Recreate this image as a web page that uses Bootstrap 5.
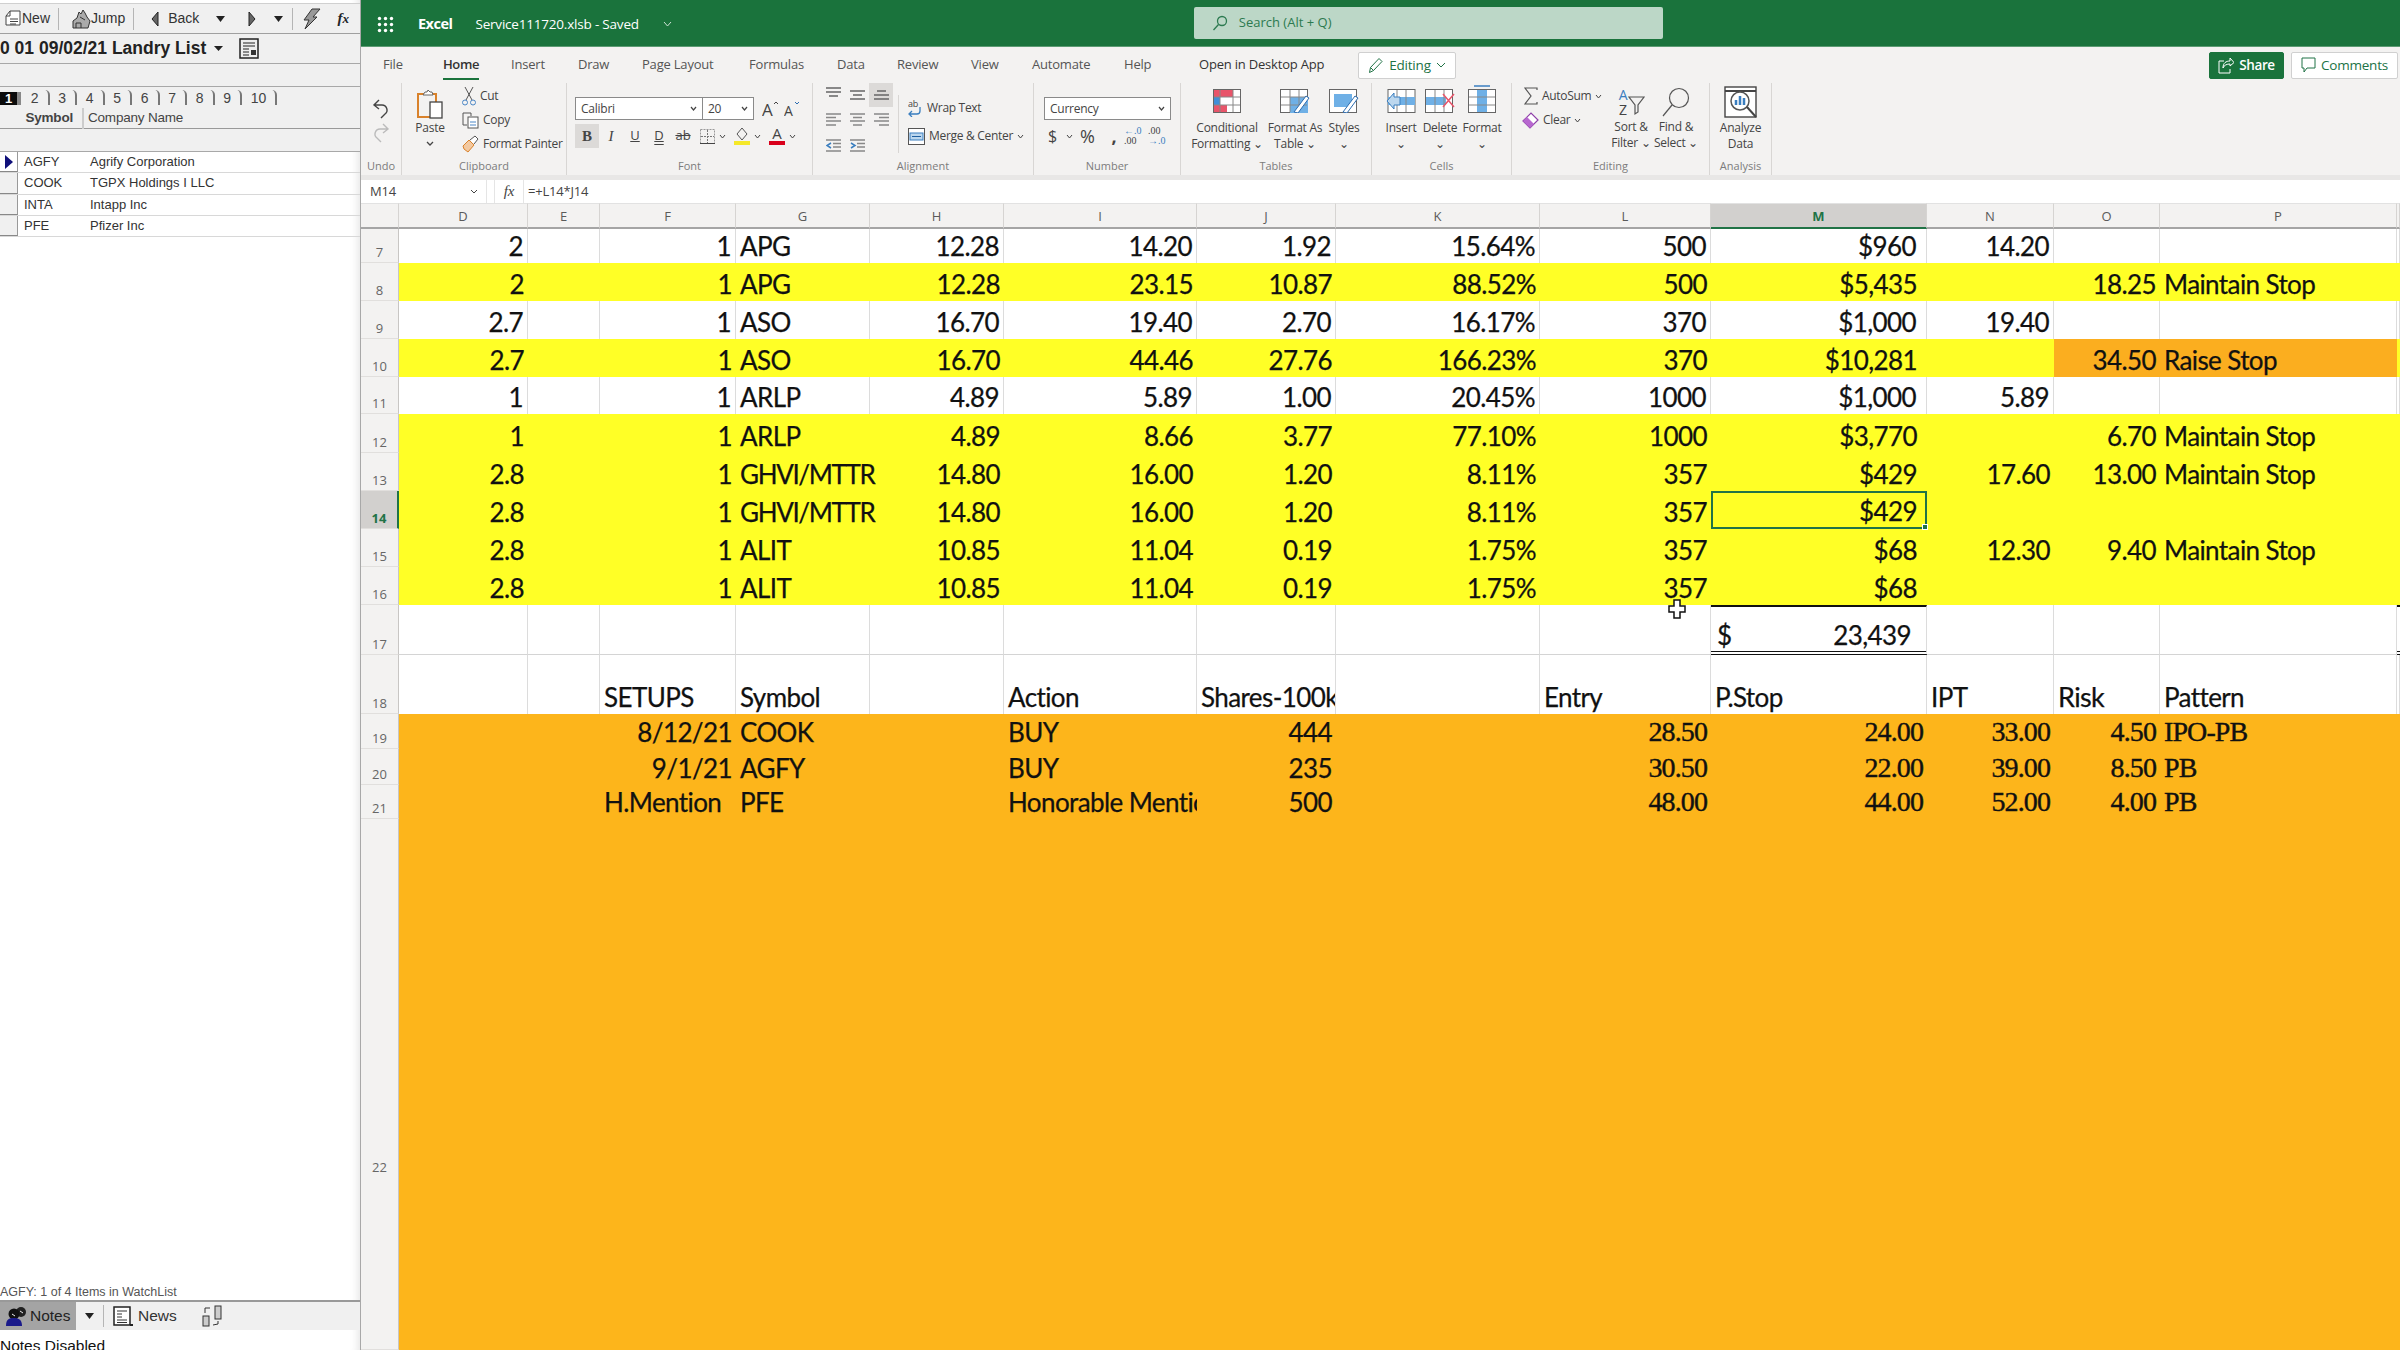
<!DOCTYPE html>
<html lang="en">
<head>
<meta charset="UTF-8">
<title>Service111720.xlsb - Excel</title>
<link href="https://cdn.jsdelivr.net/npm/bootstrap@5.3.0/dist/css/bootstrap.min.css" rel="stylesheet">
<style>
html, body { height: 1350px; overflow: hidden; background: #fff; }
body { font-family: "Open Sans", sans-serif; color: #444; }
svg { display: block; flex: none; }

/* watchlist panel */
.wl-panel { width: 361px; height: 1350px; flex: none; font-family: "Liberation Sans", Arial, sans-serif; border-right: 1px solid #a8a8a8; box-shadow: inset -10px 0 8px -8px #e4e4e4; overflow: hidden; }
.wl-tools { height: 31px; margin-top: 3px; background: #f0f0f0; border-top: 1px solid #d0d0d0; border-bottom: 1px solid #a0a0a0; font-size: 14px; color: #333; white-space: nowrap; }
.wl-sep { width: 1px; height: 22px; background: #b5b5b5; }
.wl-title { height: 30px; background: #f0f0f0; border-bottom: 1px solid #a8a8a8; font-size: 17.5px; font-weight: 700; color: #222; white-space: nowrap; }
.wl-band { height: 23px; background: #f0f0f0; border-bottom: 1px solid #a8a8a8; }
.wl-tabs { height: 22px; background: #f0f0f0; font-size: 14px; color: #444; }
.wl-tab { width: 27.5px; height: 15px; text-align: center; line-height: 16px; border-right: 2px solid #777; border-top-right-radius: 5px; flex: none; }
.wl-tab-wide { width: 35px; }
.wl-tab-on { width: 21px; height: 13px; background: #0c0c0c; color: #fff; font-weight: 700; font-size: 13px; line-height: 13px; text-align: center; border-right: 4px solid #888; flex: none; margin-right: 1px; }
.wl-head { height: 20px; background: #f0f0f0; border-bottom: 1px solid #999; font-size: 13.5px; color: #444; letter-spacing: -.2px; }
.wl-symhead { width: 84px; padding-right: 9px; border-right: 2px solid #ccc; text-align: right; font-weight: 700; }
.wl-row { height: 21.3px; font-size: 13px; color: #333; line-height: 20px; border-bottom: 1px solid #d8d8d8; }
.wl-mark { width: 18px; height: 100%; background: #f0f0f0; border-right: 1px solid #999; border-bottom: 1px solid #888; flex: none; display: flex; align-items: center; justify-content: center; }
.wl-mark-on { background: #fff; }
.wl-sym { width: 72px; padding-left: 6px; flex: none; }
.wl-status { font-size: 12.5px; color: #555; line-height: 16px; padding-top: 1px; white-space: nowrap; }
.wl-foot { height: 30px; background: #f0f0f0; border-top: 2px solid #999; font-size: 15.5px; color: #333; flex: none; }
.wl-notes { height: 100%; width: 76px; background: #a4a4a4; color: #222; }
.wl-msg { height: 20px; font-size: 15.5px; color: #111; line-height: 18px; padding-top: 7px; white-space: nowrap; flex: none; }

/* title bar */
.xl-main { width: 2039px; flex: none; height: 1350px; overflow: hidden; }
.xl-title { height: 47px; background: #1a733c; color: #fff; white-space: nowrap; border-bottom: 1px solid #5c9b73; padding-top: 2px; }
.xl-brand { font-size: 14.5px; font-weight: 700; letter-spacing: -.5px; margin-left: 24px; }
.xl-file { font-size: 13.5px; letter-spacing: -.2px; margin-left: 23px; }
.xl-search { width: 469px; height: 32px; margin-left: 522px; margin-top: -2px; background: #bcd7c7; border-radius: 2px; color: #2c7a50; font-size: 13px; padding-left: 18px; gap: 11px; }

/* ribbon */
.rb-wrap { height: 133px; background: #f3f2f1; border-bottom: 5px solid #e8e7e6; }
.rb-tabs { height: 36px; padding-left: 22px; font-size: 13px; color: #555; white-space: nowrap; letter-spacing: -.2px; }
.rb-tab { flex: none; }
.rb-tab:nth-child(1) { width: 60px; }
.rb-tab:nth-child(2) { width: 68px; }
.rb-tab:nth-child(3) { width: 67px; }
.rb-tab:nth-child(4) { width: 64px; }
.rb-tab:nth-child(5) { width: 107px; }
.rb-tab:nth-child(6) { width: 88px; }
.rb-tab:nth-child(7) { width: 60px; }
.rb-tab:nth-child(8) { width: 74px; }
.rb-tab:nth-child(9) { width: 61px; }
.rb-tab:nth-child(10) { width: 92px; }
.rb-tab:nth-child(11) { width: 75px; }
.rb-tab:nth-child(12) { width: 159px; color: #333; }
.rb-tab-on { display: inline-block; color: #333; font-weight: 600; letter-spacing: -.4px; border-bottom: 2px solid #1a733c; padding-bottom: 3px; margin-top: 5px; }
.rb-btn { height: 27px; background: #fff; border: 1px solid #d0d0d0; border-radius: 2px; font-size: 13.5px; color: #217346; gap: 5px; }
.rb-share { width: 75px; background: #1a733c; border-color: #1a733c; color: #fff; font-weight: 600; letter-spacing: -.4px; }
.rb-comments { width: 107px; margin-left: 7px; margin-right: 2px; letter-spacing: -.2px; }
.rb-groups { height: 92px; }
.rb-group { flex: none; display: flex; flex-direction: column; border-right: 1px solid #d8d6d4; height: 92px; }
.rb-body { flex: 1; display: flex; min-height: 0; }
.rb-label { height: 16px; font-size: 11px; line-height: 14px; text-align: center; color: #7c7c7c; flex: none; }
.rb-tall { display: flex; flex-direction: column; align-items: center; text-align: center; font-size: 12px; line-height: 15.5px; letter-spacing: -.25px; color: #444; flex: none; white-space: nowrap; padding-top: 6px; }
.rb-tall svg.rb-big { margin-bottom: 7px; }
.rb-line { height: 24px; font-size: 12px; letter-spacing: -.3px; gap: 4px; white-space: nowrap; color: #444; }
.rb-line-tall { height: 28px; }
.rb-select { height: 23px; background: #fff; border: 1px solid #8a8a8a; font-size: 12px; letter-spacing: -.25px; padding: 0 5px; }
.rb-ico { width: 24px; height: 24px; display: flex; align-items: center; justify-content: center; flex: none; font-size: 13px; color: #444; }
.rb-ico-on { background: #dcdad8; }
.rb-serif { font-family: "Liberation Serif", serif; font-size: 15px; }
.rb-numline { margin-top: 4px; margin-left: 4px; font-size: 16px; color: #444; }
.rb-dec { font-family: "Liberation Serif", serif; font-size: 10px; line-height: 10px; color: #444; }
.rb-blue { color: #3a7ebf; }

/* formula bar */
.fx-bar { height: 23px; background: #fff; padding-left: 5px; font-size: 13px; letter-spacing: -.2px; color: #444; }
.fx-name { width: 121px; height: 23px; border-right: 1px solid #e5e5e5; padding: 0 4px; }
.fx-fn { width: 30px; height: 23px; margin-left: 7px; margin-right: 4px; border-left: 1px solid #e5e5e5; border-right: 1px solid #e5e5e5; font-family: "Liberation Serif", serif; font-style: italic; font-size: 15px; }

/* sheet */
.xl-sheet { border-collapse: separate; border-spacing: 0; table-layout: fixed; width: 2039px; font-family: Lato, "Liberation Sans", sans-serif; font-size: 26px; color: #111; letter-spacing: -.6px; -webkit-text-stroke: .25px #111; }
.xl-sheet th { height: 26px; background: #f3f2f1; border-top: 1px solid #e2e2e2; border-right: 1px solid #d6d4d2; border-bottom: 2px solid #a5a5a5; font-family: "Open Sans", sans-serif; font-size: 13px; font-weight: 400; color: #5a5a5a; text-align: center; letter-spacing: 0; -webkit-text-stroke: 0; padding: 3px 0 0; }
.xl-sheet th.sel-col { background: #d2d0ce; color: #217346; font-weight: 700; border-bottom-color: #217346; }
.xl-sheet td { padding: 0 4px 1px; vertical-align: bottom; white-space: nowrap; overflow: hidden; line-height: 32px; }
.xl-sheet td.num { text-align: right; }
.xl-sheet td.pad-money { padding-right: 10px; }
.xl-sheet td.tight { letter-spacing: -1.35px; overflow: visible; }
.xl-sheet td.rowno { background: #f3f2f1; border-right: 1px solid #c8c6c4; border-bottom: 1px solid #e1dfdd; font-family: "Open Sans", sans-serif; font-size: 13px; line-height: 18px; color: #666; text-align: center; letter-spacing: 0; -webkit-text-stroke: 0; padding: 0 0 1px; }
.xl-sheet td.rowno-on { background: #d2d0ce; color: #217346; font-weight: 700; border-right: 2px solid #217346; }
.xl-sheet td.rowno-tall { vertical-align: top; padding-top: 339px; }
.row-white td { background: #fff; border-right: 1px solid #dcdcdc; }
.row-grid td { border-bottom: 1px solid #d4d4d4; }
.row-yellow td { background: #ffff26; }
.row-orange td { background: #fdb51b; }
.xl-sheet td.cell-orange { background: #fbae1f; }
.xl-sheet td.cell-sel { border: 2px solid #217346; position: relative; overflow: visible; padding: 0 8px 0 5px; }
.cell-handle { position: absolute; right: -3px; bottom: -3px; width: 6px; height: 6px; background: #217346; border: 1px solid #fff; }
.xl-sheet td.cell-total, .xl-sheet td.cell-tick { border-top: 2px solid #111; border-bottom: 4px double #111; }
.xl-sheet td.cell-total { padding: 0 15px 0 6px; }
.xl-sheet td.cell-tick { padding: 0; border-right: 0; }
.total-wrap { display: flex; justify-content: space-between; }
.xl-sheet td.cell-serif { font-family: "Liberation Serif", serif; font-size: 28px; letter-spacing: -.9px; -webkit-text-stroke: .4px #111; }
.xl-sheet td.cell-big { font-size: 27px; }
.sheet-area { position: relative; }
.xl-cursor { position: absolute; left: 1307px; top: 396px; }
</style>
</head>
<body>
<div class="d-flex">

  <aside class="wl-panel d-flex flex-column">
    <div class="wl-tools d-flex align-items-center">
      <svg width="18" height="20" viewBox="0 0 18 20" class="ms-1"><path d="M6 2h10v14H2V7z" fill="#fff" stroke="#444"/><path d="M6 2v5H2M6 10h8M6 12.500h8M6 15h6" fill="none" stroke="#444"/></svg>
      <span class="me-2">New</span>
      <span class="wl-sep me-2"></span>
      <svg width="20" height="22" viewBox="0 0 20 22" class="ms-1"><path d="M2 20v-7l4-3 2-6 2 2 2-4 2 3 2 4 3 4-2 7z" fill="#aaa" stroke="#333"/><path d="M5 20v-5h5v5M9 9l5 3" fill="none" stroke="#333"/></svg>
      <span class="me-2">Jump</span>
      <span class="wl-sep"></span>
      <svg width="10" height="16" viewBox="0 0 10 16" class="ms-3"><path d="M8 1L2 8l6 7z" fill="#666" stroke="#222"/></svg>
      <span class="ms-2">Back</span>
      <svg width="11" height="6" viewBox="0 0 11 6" class="ms-3"><path d="M1 0h9L5.500 6z" fill="#222"/></svg>
      <svg width="10" height="16" viewBox="0 0 10 16" style="margin-left:21px"><path d="M2 1l6 7-6 7z" fill="#666" stroke="#222"/></svg>
      <svg width="11" height="6" viewBox="0 0 11 6" class="ms-3"><path d="M1 0h9L5.500 6z" fill="#222"/></svg>
      <span class="wl-sep ms-2"></span>
      <svg width="20" height="22" viewBox="0 0 20 22" class="ms-2"><path d="M11 1h8l-7 8h4L4 21l4-9H3z" fill="#999" stroke="#333"/></svg>
      <span class="ms-3 rb-serif fw-bold fst-italic text-dark">f<small>x</small></span>
    </div>
    <div class="wl-title d-flex align-items-center">
      <span>0 01 09/02/21 Landry List</span>
      <svg width="9" height="5" viewBox="0 0 9 5" class="ms-2"><path d="M0 0h9L4.500 5z" fill="#222"/></svg>
      <svg width="20" height="21" viewBox="0 0 20 21" class="ms-3"><rect x="1" y="1" width="18" height="19" fill="#eee" stroke="#222" stroke-width="1.500"/><path d="M4 5h12M4 8h12M4 11h6M4 14h6M4 17h6" stroke="#222"/><rect x="12" y="12" width="5" height="5" fill="#333"/></svg>
    </div>
    <div class="wl-band"></div>
    <div class="wl-tabs d-flex align-items-end pb-1">
      <span class="wl-tab-on">1</span>
      <span class="wl-tab">2</span><span class="wl-tab">3</span><span class="wl-tab">4</span><span class="wl-tab">5</span><span class="wl-tab">6</span><span class="wl-tab">7</span><span class="wl-tab">8</span><span class="wl-tab">9</span><span class="wl-tab wl-tab-wide">10</span>
    </div>
    <div class="wl-head d-flex align-items-center">
      <span class="wl-symhead">Symbol</span>
      <span class="ps-1">Company Name</span>
    </div>
    <div class="wl-band"></div>
    <div class="wl-row d-flex"><span class="wl-mark wl-mark-on"><svg width="8" height="14" viewBox="0 0 8 14"><path d="M0 0l8 7-8 7z" fill="#10107a"/></svg></span><span class="wl-sym">AGFY</span><span>Agrify Corporation</span></div>
    <div class="wl-row d-flex"><span class="wl-mark"></span><span class="wl-sym">COOK</span><span>TGPX Holdings I LLC</span></div>
    <div class="wl-row d-flex"><span class="wl-mark"></span><span class="wl-sym">INTA</span><span>Intapp Inc</span></div>
    <div class="wl-row d-flex"><span class="wl-mark"></span><span class="wl-sym">PFE</span><span>Pfizer Inc</span></div>
    <div class="flex-grow-1"></div>
    <div class="wl-status">AGFY: 1 of 4 Items in WatchList</div>
    <div class="wl-foot d-flex align-items-center">
      <span class="wl-notes d-flex align-items-center">
        <svg width="26" height="22" viewBox="0 0 26 22" class="ms-1"><circle cx="17" cy="7" r="5" fill="#222"/><circle cx="10" cy="9" r="5.500" fill="#111"/><path d="M2 21c0-7 3-8 8-8s8 2 8 8z" fill="#1a1a8a"/><path d="M8 9l3 2M16 6l3 2" stroke="#eee"/></svg>
        <span>Notes</span>
      </span>
      <svg width="11" height="6" viewBox="0 0 11 6" class="ms-2"><path d="M1 0h9L5.500 6z" fill="#222"/></svg>
      <span class="wl-sep ms-2"></span>
      <svg width="22" height="21" viewBox="0 0 22 21" class="ms-2"><rect x="2" y="1" width="16" height="18" fill="#fff" stroke="#222" stroke-width="1.500"/><path d="M5 5h10M5 8h5M5 11h5M5 14h10M5 16.500h10" stroke="#333"/><path d="M18 19h3" stroke="#222" stroke-width="2"/></svg>
      <span class="ms-1">News</span>
      <svg width="22" height="22" viewBox="0 0 22 22" class="ms-4"><rect x="14" y="1" width="6" height="13" fill="#ccc" stroke="#333"/><rect x="2" y="11" width="6" height="10" fill="#ccc" stroke="#333"/><path d="M4 8V3h5M12 20l5-1v-3" fill="none" stroke="#333"/></svg>
    </div>
    <div class="wl-msg">Notes Disabled</div>
  </aside>

  <main class="xl-main">
    <header class="xl-title d-flex align-items-center">
      <svg width="17" height="17" viewBox="0 0 17 17" class="ms-3" fill="#fff"><circle cx="2.500" cy="2.500" r="1.700"/><circle cx="8.500" cy="2.500" r="1.700"/><circle cx="14.500" cy="2.500" r="1.700"/><circle cx="2.500" cy="8.500" r="1.700"/><circle cx="8.500" cy="8.500" r="1.700"/><circle cx="14.500" cy="8.500" r="1.700"/><circle cx="2.500" cy="14.500" r="1.700"/><circle cx="8.500" cy="14.500" r="1.700"/><circle cx="14.500" cy="14.500" r="1.700"/></svg>
      <span class="xl-brand">Excel</span>
      <span class="xl-file">Service111720.xlsb - Saved</span>
      <svg width="9" height="6" viewBox="0 0 9 6" class="ms-4"><path d="M1 1l3.500 4L8 1" fill="none" stroke="#cfe3d6"/></svg>
      <div class="xl-search d-flex align-items-center">
        <svg width="16" height="16" viewBox="0 0 16 16"><circle cx="10" cy="6" r="4.500" fill="none" stroke="#2c7a50" stroke-width="1.300"/><path d="M6.500 9.500L1.500 15" stroke="#2c7a50" stroke-width="1.300"/></svg>
        <span>Search (Alt + Q)</span>
      </div>
    </header>

    <section class="rb-wrap">
      <div class="rb-tabs d-flex align-items-center">
        <span class="rb-tab">File</span>
        <span class="rb-tab"><span class="rb-tab-on">Home</span></span>
        <span class="rb-tab">Insert</span>
        <span class="rb-tab">Draw</span>
        <span class="rb-tab">Page Layout</span>
        <span class="rb-tab">Formulas</span>
        <span class="rb-tab">Data</span>
        <span class="rb-tab">Review</span>
        <span class="rb-tab">View</span>
        <span class="rb-tab">Automate</span>
        <span class="rb-tab">Help</span>
        <span class="rb-tab">Open in Desktop App</span>
        <span class="rb-btn d-flex align-items-center justify-content-center" style="width:98px">
          <svg width="16" height="18" viewBox="0 0 16 18"><path d="M1.500 16.500l1-5L11 2.500l3 3-8.500 9zM2.500 11.500l3 3" fill="none" stroke="#217346"/></svg>Editing
          <svg width="10" height="6" viewBox="0 0 10 6"><path d="M1 1l4 4 4-4" fill="none" stroke="#217346"/></svg>
        </span>
        <span class="rb-btn rb-share d-flex align-items-center justify-content-center ms-auto">
          <svg width="16" height="18" viewBox="0 0 16 18"><path d="M6 5H1v12h11v-4M5 12c0-5 3-7 7-7V2l4 4.500L12 10V8c-3 0-6 1-7 4z" fill="none" stroke="#fff"/></svg>Share
        </span>
        <span class="rb-btn rb-comments d-flex align-items-center justify-content-center">
          <svg width="15" height="16" viewBox="0 0 15 16"><path d="M1 1h13v10H6l-3 4v-4H1z" fill="none" stroke="#217346"/></svg>Comments
        </span>
      </div>

      <div class="rb-groups d-flex">
        <!-- undo -->
        <div class="rb-group" style="width:41px">
          <div class="rb-body flex-column align-items-center pt-3">
            <svg width="18" height="20" viewBox="0 0 18 20"><path d="M7 1L2 6l5 4M2 6h8a5 5 0 0 1 3 9l-4 4" fill="none" stroke="#444" stroke-width="1.400"/></svg>
            <svg width="18" height="20" viewBox="0 0 18 20" class="mt-1"><path d="M11 1l5 5-5 4M16 6H8a5 5 0 0 0-3 9l4 4" fill="none" stroke="#bbb" stroke-width="1.400"/></svg>
          </div>
          <div class="rb-label">Undo</div>
        </div>
        <!-- clipboard -->
        <div class="rb-group" style="width:165px">
          <div class="rb-body">
            <div class="rb-tall" style="width:36px;margin-left:10px">
              <svg class="rb-big" width="28" height="30" viewBox="0 0 28 30" style="margin-bottom:1px"><path d="M8 5H2v23h12" fill="none" stroke="#d9822b" stroke-width="2"/><path d="M14 5h6v8" fill="none" stroke="#d9822b" stroke-width="2"/><path d="M7 6l2-3h2l1-2 2 2h2l1 3z" fill="#fff" stroke="#666"/><rect x="14" y="13" width="12" height="16" fill="#fff" stroke="#444" stroke-width="1.300"/></svg>
              <span>Paste</span>
              <svg width="8" height="5" viewBox="0 0 8 5" style="margin-top:5px"><path d="M1 1l3 3 3-3" fill="none" stroke="#444" stroke-width="1.300"/></svg>
            </div>
            <div style="margin-left:14px;padding-top:1px">
              <div class="rb-line d-flex align-items-center"><svg width="14" height="20" viewBox="0 0 14 20"><path d="M3 1l7 13M11 1L4 14" fill="none" stroke="#555"/><circle cx="3" cy="16.500" r="2.500" fill="none" stroke="#4a86c5"/><circle cx="11" cy="16.500" r="2.500" fill="none" stroke="#4a86c5"/></svg><span>Cut</span></div>
              <div class="rb-line d-flex align-items-center"><svg width="17" height="17" viewBox="0 0 17 17"><path d="M1 1h8v3M1 1v12h4" fill="none" stroke="#555"/><rect x="6" y="5" width="10" height="11" fill="#fff" stroke="#555"/><path d="M8 10h6M8 13h6" stroke="#4a86c5"/></svg><span>Copy</span></div>
              <div class="rb-line d-flex align-items-center"><svg width="17" height="18" viewBox="0 0 17 18"><path d="M1 11l6-6 5 5-6 7-4-3z" fill="#f3c9a0" stroke="#d9822b"/><path d="M8 5l5-4 3 3-4 5" fill="#fff" stroke="#555"/></svg><span>Format Painter</span></div>
            </div>
          </div>
          <div class="rb-label">Clipboard</div>
        </div>
        <!-- font -->
        <div class="rb-group" style="width:246px">
          <div class="rb-body flex-column" style="padding:14px 0 0 8px">
            <div class="d-flex align-items-center">
              <span class="rb-select d-flex align-items-center justify-content-between" style="width:128px">Calibri<svg width="7" height="5" viewBox="0 0 7 5"><path d="M1 1l2.500 3L6 1" fill="none" stroke="#444" stroke-width="1.200"/></svg></span>
              <span class="rb-select d-flex align-items-center justify-content-between" style="width:52px;margin-left:-1px">20<svg width="7" height="5" viewBox="0 0 7 5"><path d="M1 1l2.500 3L6 1" fill="none" stroke="#444" stroke-width="1.200"/></svg></span>
              <svg width="18" height="20" viewBox="0 0 18 20" class="ms-2"><text x="0" y="17" font-family="Open Sans" font-size="17" fill="#444">A</text><path d="M12 5l2-2 2 2" fill="none" stroke="#444"/></svg>
              <svg width="18" height="20" viewBox="0 0 18 20" class="ms-1"><text x="0" y="17" font-family="Open Sans" font-size="14" fill="#444">A</text><path d="M11 3l2 2 2-2" fill="none" stroke="#2b6cb0"/></svg>
            </div>
            <div class="d-flex align-items-center" style="margin-top:4px">
              <span class="rb-ico rb-ico-on fw-bold rb-serif">B</span>
              <span class="rb-ico rb-serif fst-italic">I</span>
              <span class="rb-ico text-decoration-underline">U</span>
              <span class="rb-ico" style="text-decoration:underline double">D</span>
              <span class="rb-ico text-decoration-line-through">ab</span>
              <span class="rb-ico"><svg width="15" height="15" viewBox="0 0 15 15"><rect x=".5" y=".5" width="14" height="14" fill="none" stroke="#999" stroke-dasharray="2 1"/><path d="M7.500 1v13M1 7.500h13" stroke="#777" stroke-dasharray="2 1"/><path d="M0 14.500h15" stroke="#444"/></svg></span>
              <svg width="7" height="5" viewBox="0 0 7 5"><path d="M1 1l2.500 3L6 1" fill="none" stroke="#444"/></svg>
              <span class="rb-ico ms-1"><svg width="16" height="19" viewBox="0 0 16 19"><path d="M8 1l5 6-5 6-5-6z" fill="none" stroke="#555"/><rect x="0" y="14" width="16" height="4" fill="#f5e829"/></svg></span>
              <svg width="7" height="5" viewBox="0 0 7 5"><path d="M1 1l2.500 3L6 1" fill="none" stroke="#444"/></svg>
              <span class="rb-ico ms-1"><svg width="16" height="19" viewBox="0 0 16 19"><text x="8" y="12" text-anchor="middle" font-family="Open Sans" font-size="15" fill="#444">A</text><rect x="0" y="14" width="16" height="4" fill="#d9001b"/></svg></span>
              <svg width="7" height="5" viewBox="0 0 7 5"><path d="M1 1l2.500 3L6 1" fill="none" stroke="#444"/></svg>
            </div>
          </div>
          <div class="rb-label">Font</div>
        </div>
        <!-- alignment -->
        <div class="rb-group" style="width:221px">
          <div class="rb-body">
            <div class="d-flex flex-column" style="margin-left:8px;width:72px">
              <div class="d-flex">
                <span class="rb-ico align-items-start pt-1"><svg width="15" height="11" viewBox="0 0 15 11" stroke="#666" stroke-width="1.500"><path d="M0 1h15M0 5h15M3 9h9"/></svg></span>
                <span class="rb-ico"><svg width="15" height="11" viewBox="0 0 15 11" stroke="#666" stroke-width="1.500"><path d="M0 1h15M3 5h9M0 9h15"/></svg></span>
                <span class="rb-ico rb-ico-on"><svg width="15" height="11" viewBox="0 0 15 11" stroke="#666" stroke-width="1.500"><path d="M3 1h9M0 5h15M0 9h15"/></svg></span>
              </div>
              <div class="d-flex">
                <span class="rb-ico"><svg width="15" height="13" viewBox="0 0 15 13" stroke="#888" stroke-width="1.500"><path d="M0 1h15M0 4.500h10M0 8h15M0 12h10"/></svg></span>
                <span class="rb-ico"><svg width="15" height="13" viewBox="0 0 15 13" stroke="#888" stroke-width="1.500"><path d="M0 1h15M3 4.500h9M0 8h15M3 12h9"/></svg></span>
                <span class="rb-ico"><svg width="15" height="13" viewBox="0 0 15 13" stroke="#888" stroke-width="1.500"><path d="M0 1h15M5 4.500h10M0 8h15M5 12h10"/></svg></span>
              </div>
              <div class="d-flex" style="margin-top:2px">
                <span class="rb-ico"><svg width="15" height="13" viewBox="0 0 15 13" stroke="#888" stroke-width="1.500"><path d="M0 1h15M0 12h15M7 4.500h8M7 8h8"/><path d="M5 4L1 6.500 5 9" fill="none" stroke="#3a7ebf"/></svg></span>
                <span class="rb-ico"><svg width="15" height="13" viewBox="0 0 15 13" stroke="#888" stroke-width="1.500"><path d="M0 1h15M0 12h15M7 4.500h8M7 8h8"/><path d="M1 4l4 2.500L1 9" fill="none" stroke="#3a7ebf"/></svg></span>
              </div>
            </div>
            <div style="margin:12px 0 6px 5px;width:1px;background:#d8d6d4"></div>
            <div style="margin-left:9px;padding-top:11px">
              <div class="rb-line rb-line-tall d-flex align-items-center"><svg width="15" height="18" viewBox="0 0 15 18"><text x="0" y="8" font-family="Open Sans" font-size="9" fill="#444">ab</text><path d="M12 8v4a3 3 0 0 1-3 3H2M4 12l-3 3 3 3" fill="none" stroke="#3a7ebf" stroke-width="1.300"/></svg><span>Wrap Text</span></div>
              <div class="rb-line rb-line-tall d-flex align-items-center"><svg width="17" height="17" viewBox="0 0 17 17"><rect x=".5" y=".5" width="16" height="16" fill="#fff" stroke="#555"/><rect x="2" y="5" width="13" height="7" fill="#bcd7ee" stroke="#3a7ebf"/><path d="M4 8.500h9" stroke="#1f5f9f"/></svg><span>Merge &amp; Center</span><svg width="7" height="5" viewBox="0 0 7 5"><path d="M1 1l2.500 3L6 1" fill="none" stroke="#444"/></svg></div>
            </div>
          </div>
          <div class="rb-label">Alignment</div>
        </div>
        <!-- number -->
        <div class="rb-group" style="width:147px">
          <div class="rb-body flex-column" style="padding:14px 0 0 10px">
            <span class="rb-select d-flex align-items-center justify-content-between" style="width:127px">Currency<svg width="7" height="5" viewBox="0 0 7 5"><path d="M1 1l2.500 3L6 1" fill="none" stroke="#444" stroke-width="1.200"/></svg></span>
            <div class="rb-numline d-flex align-items-center">
              <span style="width:18px">$</span>
              <svg width="7" height="5" viewBox="0 0 7 5"><path d="M1 1l2.500 3L6 1" fill="none" stroke="#444"/></svg>
              <span style="margin-left:7px;width:24px;font-size:18px;line-height:20px">%</span>
              <span class="fw-bold" style="width:20px;text-align:center;font-size:18px;line-height:20px">,</span>
              <span class="rb-dec" style="width:24px"><span class="rb-blue">&larr;.0</span><br>.00</span>
              <span class="rb-dec" style="width:20px">.00<br><span class="rb-blue">&rarr;.0</span></span>
            </div>
          </div>
          <div class="rb-label">Number</div>
        </div>
        <!-- tables -->
        <div class="rb-group" style="width:191px">
          <div class="rb-body" style="padding-left:4px">
            <div class="rb-tall" style="width:84px">
              <svg class="rb-big" width="28" height="24" viewBox="0 0 28 24"><rect x=".5" y=".5" width="27" height="23" fill="#fff" stroke="#666"/><rect x="1" y="1" width="13" height="7" fill="#e8556a"/><rect x="1" y="8" width="6" height="8" fill="#3f8fd8"/><rect x="1" y="16" width="13" height="7" fill="#e8556a"/><rect x="14" y="1" width="6" height="7" fill="#e8556a"/><path d="M20 1v22M7 1v22M1 8h26M1 16h26" stroke="#888"/></svg>
              <span>Conditional</span><span>Formatting &#8964;</span>
            </div>
            <div class="rb-tall" style="width:52px">
              <svg class="rb-big" width="30" height="24" viewBox="0 0 30 24"><rect x=".5" y=".5" width="27" height="23" fill="#fff" stroke="#666"/><rect x="10" y="8" width="18" height="16" fill="#6fb0e6"/><path d="M10 1v22M19 1v22M1 8h26M1 16h26" stroke="#888"/><path d="M14 23l12-16 3 2-11 15z" fill="#fff" stroke="#2b6cb0"/></svg>
              <span>Format As</span><span>Table &#8964;</span>
            </div>
            <div class="rb-tall" style="width:46px">
              <svg class="rb-big" width="30" height="24" viewBox="0 0 30 24"><rect x=".5" y=".5" width="27" height="23" fill="#fff" stroke="#666"/><rect x="5" y="5" width="18" height="13" fill="#6fb0e6"/><path d="M14 23l12-16 3 2-11 15z" fill="#fff" stroke="#2b6cb0"/></svg>
              <span>Styles</span><span>&#8964;</span>
            </div>
          </div>
          <div class="rb-label">Tables</div>
        </div>
        <!-- cells -->
        <div class="rb-group" style="width:140px">
          <div class="rb-body" style="padding-left:10px">
            <div class="rb-tall" style="width:38px">
              <svg class="rb-big" width="31" height="24" viewBox="0 0 31 24"><rect x="2" y=".5" width="27" height="23" fill="#fff" stroke="#666"/><rect x="2" y="8" width="27" height="8" fill="#6fb0e6"/><path d="M11 1v22M20 1v22" stroke="#888"/><path d="M8 4L1 12l7 8v-4h6V8H8z" fill="#bcd7ee" stroke="#3a7ebf"/></svg>
              <span>Insert</span><span>&#8964;</span>
            </div>
            <div class="rb-tall" style="width:40px">
              <svg class="rb-big" width="30" height="24" viewBox="0 0 30 24"><rect x=".5" y=".5" width="27" height="23" fill="#fff" stroke="#666"/><rect x="1" y="8" width="20" height="8" fill="#6fb0e6"/><path d="M10 1v22M19 1v22" stroke="#888"/><path d="M18 5l11 13M29 5L18 18" stroke="#e8556a" stroke-width="1.500"/></svg>
              <span>Delete</span><span>&#8964;</span>
            </div>
            <div class="rb-tall" style="width:44px;padding-top:2px">
              <svg class="rb-big" width="28" height="28" viewBox="0 0 28 28"><path d="M6 1h16" stroke="#3a7ebf" stroke-width="1.500"/><rect x=".5" y="4.500" width="27" height="23" fill="#fff" stroke="#666"/><rect x="9" y="5" width="10" height="22" fill="#6fb0e6"/><path d="M1 12h26M1 20h26" stroke="#888"/></svg>
              <span>Format</span><span>&#8964;</span>
            </div>
          </div>
          <div class="rb-label">Cells</div>
        </div>
        <!-- editing -->
        <div class="rb-group" style="width:198px">
          <div class="rb-body" style="padding-left:12px">
            <div style="width:84px;padding-top:1px">
              <div class="rb-line d-flex align-items-center"><svg width="14" height="18" viewBox="0 0 14 18"><path d="M13 3V1H1l6 8-6 8h12v-2" fill="none" stroke="#555" stroke-width="1.200"/></svg><span>AutoSum</span><svg width="7" height="5" viewBox="0 0 7 5"><path d="M1 1l2.500 3L6 1" fill="none" stroke="#444"/></svg></div>
              <div class="rb-line d-flex align-items-center"><svg width="17" height="17" viewBox="0 0 17 17" style="margin-left:-2px"><path d="M1 9l8-8 7 7-8 8z" fill="#fff" stroke="#8e3fa8" stroke-width="1.200"/><path d="M1 9l4-4 7 7-4 4z" fill="#b768cf"/></svg><span>Clear</span><svg width="7" height="5" viewBox="0 0 7 5"><path d="M1 1l2.500 3L6 1" fill="none" stroke="#444"/></svg></div>
            </div>
            <div class="rb-tall" style="width:46px;padding-top:4px">
              <svg class="rb-big" width="28" height="30" viewBox="0 0 28 30" style="margin-bottom:2px"><text x="6" y="13" text-anchor="middle" font-family="Open Sans" font-size="14" fill="#3a7ebf">A</text><text x="6" y="28" text-anchor="middle" font-family="Open Sans" font-size="14" fill="#444">Z</text><path d="M12 10h15l-6 8v7l-3 2v-9z" fill="none" stroke="#555" stroke-width="1.200"/></svg>
              <span>Sort &amp;</span><span>Filter &#8964;</span>
            </div>
            <div class="rb-tall" style="width:44px;padding-top:4px">
              <svg class="rb-big" width="30" height="30" viewBox="0 0 30 30" style="margin-bottom:2px"><circle cx="18" cy="11" r="9.500" fill="none" stroke="#555" stroke-width="1.200"/><path d="M11 18L2 29" stroke="#555" stroke-width="1.200"/></svg>
              <span>Find &amp;</span><span>Select &#8964;</span>
            </div>
          </div>
          <div class="rb-label">Editing</div>
        </div>
        <!-- analysis -->
        <div class="rb-group" style="width:62px">
          <div class="rb-body justify-content-center">
            <div class="rb-tall" style="padding-top:3px">
              <svg class="rb-big" width="34" height="32" viewBox="0 0 34 32" style="margin-bottom:2px"><rect x="1" y="1" width="31" height="30" fill="#fff" stroke="#444" stroke-width="1.400"/><path d="M1 5h31" stroke="#444" stroke-width="2"/><circle cx="16" cy="15" r="9" fill="#fff" stroke="#555" stroke-width="1.500"/><path d="M12 19v-5M16 19v-9M20 19v-7" stroke="#3a7ebf" stroke-width="2.500"/><path d="M23 21l9 10" stroke="#444" stroke-width="2"/></svg>
              <span>Analyze</span><span>Data</span>
            </div>
          </div>
          <div class="rb-label">Analysis</div>
        </div>
      </div>
    </section>

    <div class="fx-bar d-flex align-items-center">
      <div class="fx-name d-flex align-items-center justify-content-between">M14<svg width="8" height="5" viewBox="0 0 8 5" class="me-1"><path d="M1 1l3 3 3-3" fill="none" stroke="#444"/></svg></div>
      <div class="fx-fn d-flex align-items-center justify-content-center">fx</div>
      <div>=+L14*J14</div>
    </div>

    <div class="sheet-area">
      <table class="xl-sheet">
        <colgroup id="sheetCols"></colgroup>
        <thead><tr id="sheetHead"></tr></thead>
        <tbody id="sheetBody"></tbody>
      </table>
      <svg class="xl-cursor" width="18" height="20" viewBox="0 0 18 20"><path d="M6 1h6v6h5v6h-5v6H6v-6H1V7h5z" fill="#fff" stroke="#111" stroke-width="1.500"/></svg>
    </div>
  </main>
</div>

<script src="https://cdn.jsdelivr.net/npm/bootstrap@5.3.0/dist/js/bootstrap.bundle.min.js"></script>
<script>
  const widths = [38, 129, 72, 136, 134, 134, 193, 139, 204, 171, 216, 127, 106, 237, 3];
  const letters = ['', 'D', 'E', 'F', 'G', 'H', 'I', 'J', 'K', 'L', 'M', 'N', 'O', 'P', ''];

  document.getElementById('sheetCols').innerHTML = widths.map(w => `<col width="${w}">`).join('');
  document.getElementById('sheetHead').innerHTML = letters.map(l =>
    `<th class="${l === 'M' ? 'sel-col' : ''}">${l}</th>`).join('');

  // D E F G H I J K L M N O P
  const rows = [
    [7, 34, 'white', ['2', '', '1', 'APG', '12.28', '14.20', '1.92', '15.64%', '500', '$960', '14.20', '', '']],
    [8, 38, 'yellow', ['2', '', '1', 'APG', '12.28', '23.15', '10.87', '88.52%', '500', '$5,435', '', '18.25', 'Maintain Stop']],
    [9, 38, 'white', ['2.7', '', '1', 'ASO', '16.70', '19.40', '2.70', '16.17%', '370', '$1,000', '19.40', '', '']],
    [10, 38, 'yellow', ['2.7', '', '1', 'ASO', '16.70', '44.46', '27.76', '166.23%', '370', '$10,281', '', '34.50', 'Raise Stop']],
    [11, 37, 'white', ['1', '', '1', 'ARLP', '4.89', '5.89', '1.00', '20.45%', '1000', '$1,000', '5.89', '', '']],
    [12, 39, 'yellow', ['1', '', '1', 'ARLP', '4.89', '8.66', '3.77', '77.10%', '1000', '$3,770', '', '6.70', 'Maintain Stop']],
    [13, 38, 'yellow', ['2.8', '', '1', 'GHVI/MTTR', '14.80', '16.00', '1.20', '8.11%', '357', '$429', '17.60', '13.00', 'Maintain Stop']],
    [14, 38, 'yellow', ['2.8', '', '1', 'GHVI/MTTR', '14.80', '16.00', '1.20', '8.11%', '357', '$429', '', '', '']],
    [15, 38, 'yellow', ['2.8', '', '1', 'ALIT', '10.85', '11.04', '0.19', '1.75%', '357', '$68', '12.30', '9.40', 'Maintain Stop']],
    [16, 38, 'yellow', ['2.8', '', '1', 'ALIT', '10.85', '11.04', '0.19', '1.75%', '357', '$68', '', '', '']],
    [17, 50, 'white grid', ['', '', '', '', '', '', '', '', '', 'TOTAL', '', '', '']],
    [18, 59, 'white', ['', '', 'SETUPS', 'Symbol', '', 'Action', 'Shares-100k', '', 'Entry', 'P.Stop', 'IPT', 'Risk', 'Pattern']],
    [19, 35, 'orange', ['', '', '8/12/21', 'COOK', '', 'BUY', '444', '', '28.50', '24.00', '33.00', '4.50', 'IPO-PB']],
    [20, 36, 'orange', ['', '', '9/1/21', 'AGFY', '', 'BUY', '235', '', '30.50', '22.00', '39.00', '8.50', 'PB']],
    [21, 34, 'orange', ['', '', 'H.Mention', 'PFE', '', 'Honorable Mention', '500', '', '48.00', '44.00', '52.00', '4.00', 'PB']],
    [22, 531, 'orange', Array(13).fill('')]
  ];

  // numbers and dates sit on the right, words on the left
  const isNumber = val => /^[$\d]/.test(val);

  document.getElementById('sheetBody').innerHTML = rows.map(([no, height, kind, cells]) => {
    const rowClass = kind.split(' ').map(k => 'row-' + k).join(' ');
    const noClass = 'rowno' + (no === 14 ? ' rowno-on' : '') + (no === 22 ? ' rowno-tall' : '');
    const tds = cells.map((val, i) => {
      const cls = [];
      if (isNumber(val)) cls.push('num');
      if (i === 9 && no < 17) cls.push('pad-money');
      if (no >= 19 && no <= 21 && i >= 8) cls.push('cell-serif');
      if (no === 10 && i >= 11) cls.push('cell-orange');
      if (val === 'Risk') cls.push('cell-big');
      if (val === 'GHVI/MTTR') cls.push('tight');
      if (no === 14 && i === 9) return `<td class="num cell-sel">${val}<span class="cell-handle"></span></td>`;
      if (val === 'TOTAL') return `<td class="cell-total"><div class="total-wrap"><span>$</span><span>23,439</span></div></td>`;
      return `<td class="${cls.join(' ')}">${val}</td>`;
    }).join('');
    const lastCls = no === 17 ? 'cell-tick' : '';
    return `<tr class="${rowClass}" style="height:${height}px"><td class="${noClass}">${no}</td>${tds}<td class="${lastCls}"></td></tr>`;
  }).join('');
</script>
</body>
</html>
